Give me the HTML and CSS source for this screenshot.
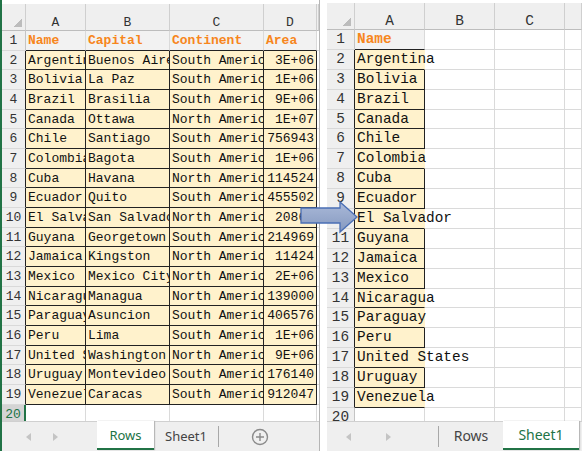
FILE: index.html
```html
<!DOCTYPE html>
<html lang="en">
<head>
    <meta charset="UTF-8">
    <title>Rows to column</title>
    <link rel="stylesheet" href="styles.css">
</head>
<body>

    <!-- Source sheet -->
    <div class="panel panel-left">
        <div class="sheet">
            <div class="grid grid-left">
                <div class="corner"></div><div class="ch">A</div><div class="ch">B</div><div class="ch">C</div><div class="ch">D</div><div class="ch"></div>
                <div class="rh">1</div><div class="h">Name</div><div class="h">Capital</div><div class="h">Continent</div><div class="h">Area</div><div class="e"></div>
                <div class="rh t">2</div><div class="c">Argentina</div><div class="c">Buenos Aires</div><div class="c">South America</div><div class="c n">3E+06</div><div class="e"></div>
                <div class="rh t">3</div><div class="c">Bolivia</div><div class="c">La Paz</div><div class="c">South America</div><div class="c n">1E+06</div><div class="e"></div>
                <div class="rh t">4</div><div class="c">Brazil</div><div class="c">Brasilia</div><div class="c">South America</div><div class="c n">9E+06</div><div class="e"></div>
                <div class="rh t">5</div><div class="c">Canada</div><div class="c">Ottawa</div><div class="c">North America</div><div class="c n">1E+07</div><div class="e"></div>
                <div class="rh t">6</div><div class="c">Chile</div><div class="c">Santiago</div><div class="c">South America</div><div class="c n">756943</div><div class="e"></div>
                <div class="rh t">7</div><div class="c">Colombia</div><div class="c">Bagota</div><div class="c">South America</div><div class="c n">1E+06</div><div class="e"></div>
                <div class="rh t">8</div><div class="c">Cuba</div><div class="c">Havana</div><div class="c">North America</div><div class="c n">114524</div><div class="e"></div>
                <div class="rh t">9</div><div class="c">Ecuador</div><div class="c">Quito</div><div class="c">South America</div><div class="c n">455502</div><div class="e"></div>
                <div class="rh t">10</div><div class="c">El Salvador</div><div class="c">San Salvador</div><div class="c">North America</div><div class="c n">20865</div><div class="e"></div>
                <div class="rh t">11</div><div class="c">Guyana</div><div class="c">Georgetown</div><div class="c">South America</div><div class="c n">214969</div><div class="e"></div>
                <div class="rh t">12</div><div class="c">Jamaica</div><div class="c">Kingston</div><div class="c">North America</div><div class="c n">11424</div><div class="e"></div>
                <div class="rh t">13</div><div class="c">Mexico</div><div class="c">Mexico City</div><div class="c">North America</div><div class="c n">2E+06</div><div class="e"></div>
                <div class="rh t">14</div><div class="c">Nicaragua</div><div class="c">Managua</div><div class="c">North America</div><div class="c n">139000</div><div class="e"></div>
                <div class="rh t">15</div><div class="c">Paraguay</div><div class="c">Asuncion</div><div class="c">South America</div><div class="c n">406576</div><div class="e"></div>
                <div class="rh t">16</div><div class="c">Peru</div><div class="c">Lima</div><div class="c">South America</div><div class="c n">1E+06</div><div class="e"></div>
                <div class="rh t">17</div><div class="c">United States</div><div class="c">Washington DC</div><div class="c">North America</div><div class="c n">9E+06</div><div class="e"></div>
                <div class="rh t">18</div><div class="c">Uruguay</div><div class="c">Montevideo</div><div class="c">South America</div><div class="c n">176140</div><div class="e"></div>
                <div class="rh t">19</div><div class="c">Venezuela</div><div class="c">Caracas</div><div class="c">South America</div><div class="c n">912047</div><div class="e"></div>
                <div class="rh sel">20</div><div class="e"></div><div class="e"></div><div class="e"></div><div class="e"></div><div class="e"></div>
            </div>
        </div>
        <div class="tabs">
            <div class="nav"><span class="arrow-l"></span><span class="arrow-r"></span></div>
            <div class="tab active tab-rows">Rows</div>
            <div class="tab tab-sheet">Sheet1</div>
            <div class="sep"></div>
            <svg class="add" width="18" height="18" viewBox="0 0 18 18">
                <circle cx="9" cy="9" r="7.5" fill="none" stroke="#8a8a8a" stroke-width="1.4"/>
                <path d="M9 5v8M5 9h8" stroke="#8a8a8a" stroke-width="1.4"/>
            </svg>
        </div>
    </div>

    <!-- Result sheet -->
    <div class="panel panel-right">
        <div class="sheet">
            <div class="grid grid-right">
                <div class="corner"></div><div class="ch">A</div><div class="ch">B</div><div class="ch">C</div><div class="ch"></div>
                <div class="rh">1</div><div class="h">Name</div><div class="e"></div><div class="e"></div><div class="e"></div>
                <div class="rh t">2</div><div class="c over">Argentina</div><div class="e"></div><div class="e"></div><div class="e"></div>
                <div class="rh t">3</div><div class="c">Bolivia</div><div class="e"></div><div class="e"></div><div class="e"></div>
                <div class="rh t">4</div><div class="c">Brazil</div><div class="e"></div><div class="e"></div><div class="e"></div>
                <div class="rh t">5</div><div class="c">Canada</div><div class="e"></div><div class="e"></div><div class="e"></div>
                <div class="rh t">6</div><div class="c">Chile</div><div class="e"></div><div class="e"></div><div class="e"></div>
                <div class="rh t">7</div><div class="c over">Colombia</div><div class="e"></div><div class="e"></div><div class="e"></div>
                <div class="rh t">8</div><div class="c">Cuba</div><div class="e"></div><div class="e"></div><div class="e"></div>
                <div class="rh t">9</div><div class="c">Ecuador</div><div class="e"></div><div class="e"></div><div class="e"></div>
                <div class="rh t">10</div><div class="c over">El Salvador</div><div class="e"></div><div class="e"></div><div class="e"></div>
                <div class="rh t">11</div><div class="c">Guyana</div><div class="e"></div><div class="e"></div><div class="e"></div>
                <div class="rh t">12</div><div class="c">Jamaica</div><div class="e"></div><div class="e"></div><div class="e"></div>
                <div class="rh t">13</div><div class="c">Mexico</div><div class="e"></div><div class="e"></div><div class="e"></div>
                <div class="rh t">14</div><div class="c over">Nicaragua</div><div class="e"></div><div class="e"></div><div class="e"></div>
                <div class="rh t">15</div><div class="c over">Paraguay</div><div class="e"></div><div class="e"></div><div class="e"></div>
                <div class="rh t">16</div><div class="c">Peru</div><div class="e"></div><div class="e"></div><div class="e"></div>
                <div class="rh t">17</div><div class="c over">United States</div><div class="e"></div><div class="e"></div><div class="e"></div>
                <div class="rh t">18</div><div class="c">Uruguay</div><div class="e"></div><div class="e"></div><div class="e"></div>
                <div class="rh t">19</div><div class="c over">Venezuela</div><div class="e"></div><div class="e"></div><div class="e"></div>
                <div class="rh">20</div><div class="e"></div><div class="e"></div><div class="e"></div><div class="e"></div>
            </div>
        </div>
        <div class="tabs">
            <div class="nav"><span class="arrow-l"></span><span class="arrow-r"></span></div>
            <div class="sep"></div>
            <div class="tab tab-rows">Rows</div>
            <div class="tab active tab-sheet">Sheet1</div>
        </div>
    </div>

    <!-- Arrow between the two sheets -->
    <svg class="move-arrow" width="60" height="40" viewBox="0 0 60 40">
        <defs>
            <linearGradient id="arrowFill" x1="0" y1="0" x2="0" y2="1">
                <stop offset="0" stop-color="#aab9d8"/>
                <stop offset="1" stop-color="#8599c0"/>
            </linearGradient>
        </defs>
        <path d="M1 9H40V3L57 18L40 33V24H1Z" fill="url(#arrowFill)" stroke="#4a6fb5" stroke-width="1.3" stroke-linejoin="miter"/>
    </svg>

</body>
</html>
```

FILE: styles.css
```css
body {
    margin: 0;
    width: 582px;
    height: 451px;
    overflow: hidden;
    display: flex;
    position: relative;
    background-color: #fff;
    font-family: "Liberation Mono", monospace;
    color: #111;
}

/* Sheet panels */
.panel {
    display: flex;
    flex-direction: column;
    height: 451px;
    box-sizing: border-box;
}

.panel-left {
    width: 320px;
    border-left: 2px solid #217346;
    border-right: 1px solid #b5b5b5;
}

.panel-right {
    width: 255px;
    margin-left: 7px;
}

.sheet {
    flex: 1;
    overflow: hidden;
}

.panel-left .sheet {
    padding-top: 4px;
}

.panel-right .sheet {
    padding-top: 3px;
}

/* Cell grids */
.grid {
    display: grid;
}

.grid-left {
    grid-template-columns: 24px 60px 84px 94px 53px 2px;
    grid-template-rows: 27px repeat(20, 19.68px);
    font-size: 13px;
}

.grid-right {
    grid-template-columns: 28px 70px 70px 70px 17px;
    grid-template-rows: 27px repeat(20, 19.9px);
    font-size: 14.4px;
}

.grid > div {
    box-sizing: border-box;
    white-space: nowrap;
    overflow: hidden;
    border-right: 1px solid #dadada;
    border-bottom: 1px solid #dadada;
    padding-left: 2px;
    line-height: 19px;
}

.grid > .corner {
    background: linear-gradient(135deg, transparent 50%, #bcbcbc 50%) no-repeat right 3px bottom 3px / 8px 8px, #efefef;
    border-right-color: #cfcfcf;
    border-bottom-color: #bdbdbd;
}

.grid > .ch {
    background-color: #efefef;
    color: #333;
    text-align: center;
    padding: 9px 0 0;
    border-right-color: #cfcfcf;
    border-bottom-color: #bdbdbd;
}

.grid > .rh {
    background-color: #efefef;
    color: #333;
    text-align: center;
    padding-left: 0;
    border-right-color: #c4c4c4;
    border-bottom-color: #d9d9d9;
}

.grid > .rh.t {
    border-right-color: #222;
}

.grid > .rh.sel {
    background-color: #d4d4d4;
    color: #217346;
    border-right: 2px solid #217346;
}

/* Header row of the list */
.grid > .h {
    background-color: #f2f2f2;
    color: #f7861c;
    font-weight: bold;
    border-bottom-color: #222;
}

/* Filled data cells */
.grid > .c {
    background-color: #fff2cc;
    border-right-color: #222;
    border-bottom-color: #222;
}

.grid > .n {
    text-align: right;
    padding: 0 2px 0 0;
}

.grid > .over {
    overflow: visible;
    border-right-color: transparent;
}

/* Sheet tabs */
.tabs {
    height: 30px;
    display: flex;
    flex-shrink: 0;
    background-color: #efefef;
    border-top: 1px solid #d0d0d0;
    box-sizing: border-box;
    font-family: "Noto Sans", sans-serif;
    font-size: 13px;
    color: #444;
}

.nav {
    display: flex;
    align-items: center;
    box-sizing: border-box;
}

.panel-left .nav {
    width: 95px;
    padding-left: 24px;
    gap: 22px;
}

.panel-right .nav {
    width: 111px;
    padding-left: 19px;
    gap: 35px;
}

.arrow-l,
.arrow-r {
    width: 0;
    height: 0;
    border-top: 4px solid transparent;
    border-bottom: 4px solid transparent;
}

.arrow-l {
    border-right: 5px solid #c4c4c4;
}

.arrow-r {
    border-left: 5px solid #c4c4c4;
}

.tab {
    display: flex;
    align-items: center;
    justify-content: center;
    height: 29px;
    margin-top: -1px;
    box-sizing: border-box;
}

.tab.active {
    background-color: #fff;
    color: #217346;
    border-bottom: 2px solid #217346;
    box-shadow: 1px 0 1px #b8b8b8;
}

.panel-left .tab-rows {
    width: 57px;
}

.panel-left .tab-sheet {
    width: 64px;
}

.panel-right .tabs {
    font-size: 14px;
}

.panel-right .tab-rows {
    width: 64px;
}

.panel-right .tab-sheet {
    width: 76px;
}

.sep {
    width: 1px;
    margin: 4px 0;
    background-color: #a8a8a8;
}

.add {
    align-self: center;
    margin-left: 32px;
}

/* Move arrow over both sheets */
.move-arrow {
    position: absolute;
    left: 300px;
    top: 199px;
}
```
